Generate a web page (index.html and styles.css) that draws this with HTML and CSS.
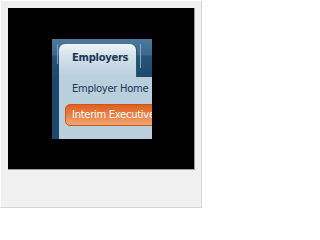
FILE: index.html
```html
<!DOCTYPE html>
<html>
<head>
<meta charset="utf-8">
<link rel="stylesheet" href="styles.css">
</head>
<body>
<div class="frame">
  <div class="stage">
    <div class="menu">
      <div class="head">
        <div class="tab">Employers</div>
      </div>
      <div class="panel">
        <div class="item">Employer Home</div>
        <div class="item active">Interim Executive</div>
      </div>
    </div>
  </div>
</div>
</body>
</html>
```
FILE: styles.css
```css
html, body {
  margin: 0;
  padding: 0;
  background: #ffffff;
}
.frame {
  box-sizing: border-box;
  width: 202px;
  height: 208px;
  border: 1px solid;
  border-color: #ffffff #d6d6d6 #d6d6d6 #ffffff;
  background: #f0f0f0;
  padding: 7px;
}
.stage {
  box-sizing: border-box;
  width: 187px;
  height: 162px;
  background: #000000;
  border-right: 1px solid #9c9c9c;
  border-bottom: 1px solid #9c9c9c;
  padding: 31px 0 0 44px;
}
.menu {
  width: 100px;
  height: 100px;
  display: flex;
  flex-direction: column;
  overflow: hidden;
  font-family: "DejaVu Sans", Verdana, sans-serif;
  font-size: 10px;
  letter-spacing: -0.3px;
  color: #1b3656;
}
.head {
  box-sizing: border-box;
  height: 38px;
  padding: 5px 0 0 7px;
  display: flex;
  align-items: flex-end;
  background:
    linear-gradient(#7fa2bc, #7fa2bc) 5px 5px / 1px 20px no-repeat,
    linear-gradient(#86a8c0, #86a8c0) 88px 5px / 1px 24px no-repeat,
    linear-gradient(to bottom, #4d789b 0, #3b6a8f 16px, #255579 17px, #1c4a6d 100%);
}
.tab {
  box-sizing: border-box;
  width: 77px;
  height: 33px;
  border-radius: 6px 6px 0 0;
  padding: 8px 0 0 13px;
  line-height: 12px;
  font-weight: bold;
  background: linear-gradient(to bottom, #eef4f7 0, #d3e2ea 12px, #b9cfdc 100%);
  box-shadow: 1px 0 0 #2a5577;
}
.panel {
  flex: 1;
  border-left: 7px solid #1b496b;
  background: #b9cfdc;
  padding-top: 6px;
  display: flex;
  flex-direction: column;
  gap: 9px;
}
.item {
  padding-left: 13px;
  line-height: 12px;
  white-space: nowrap;
}
.item.active {
  box-sizing: border-box;
  height: 22px;
  margin-left: 6px;
  margin-right: -8px;
  padding-left: 6px;
  line-height: 20px;
  color: #ffffff;
  border: 1px solid #c45a22;
  border-radius: 5px;
  background: linear-gradient(to bottom, #e0601f 0, #e97c40 45%, #f3a675 100%);
}
```
